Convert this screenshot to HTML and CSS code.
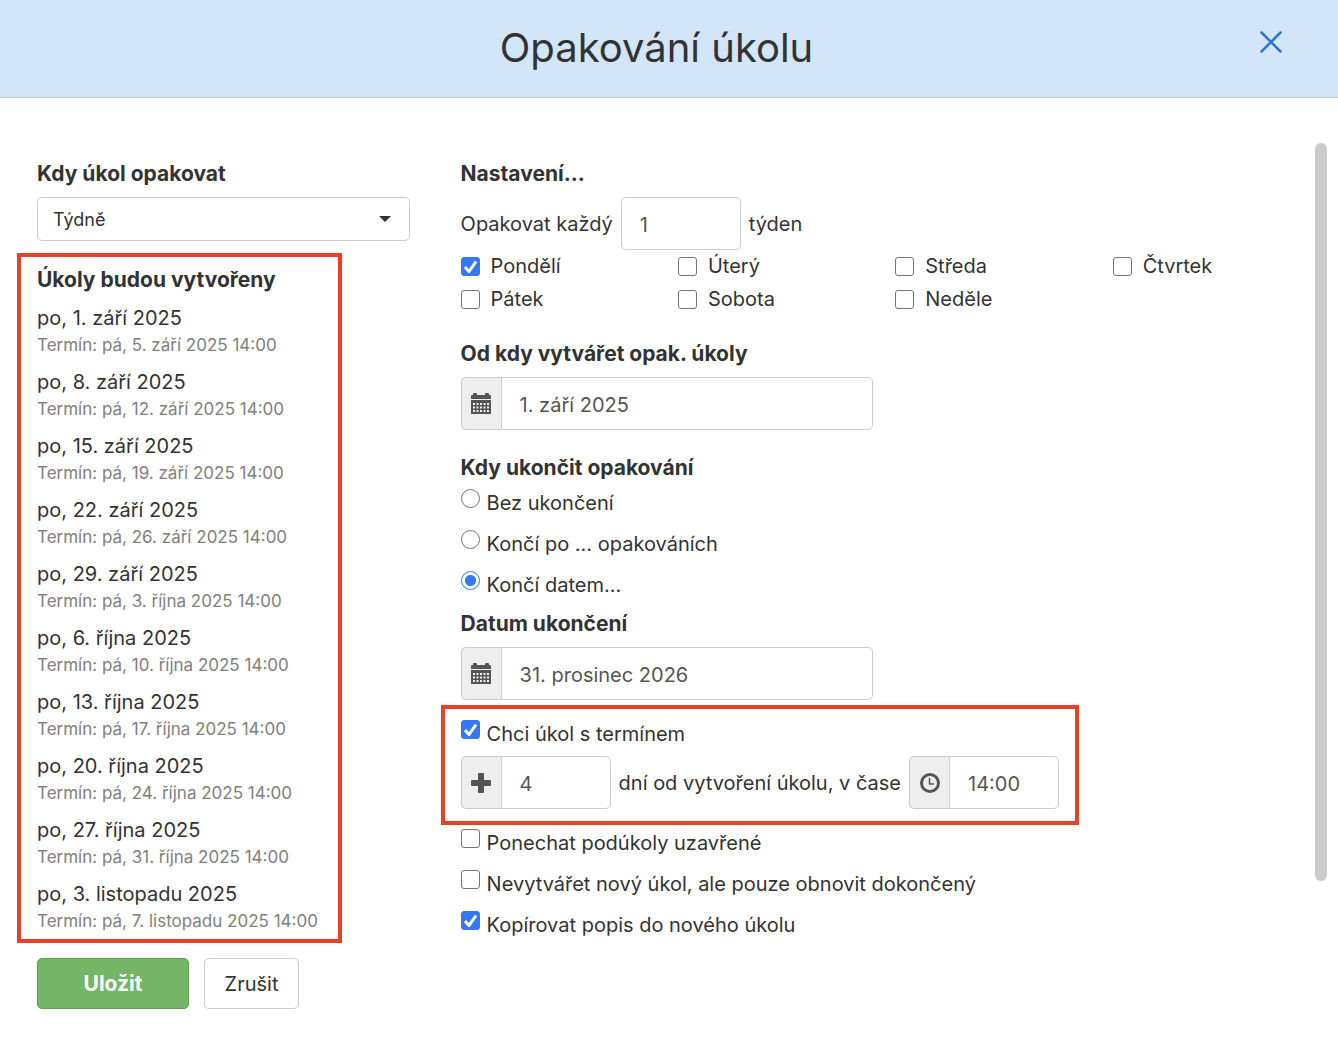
FILE: index.html
```html
<!DOCTYPE html>
<html lang="cs">
<head>
<meta charset="UTF-8">
<meta name="viewport" content="width=device-width, initial-scale=1.0">
<title>Opakování úkolu</title>
<link rel="stylesheet" href="styles.css">
</head>
<body>
<svg class="sprite" aria-hidden="true">
    <symbol id="icon-calendar" viewBox="0 0 20 21">
        <path d="M0 6V3a1 1 0 0 1 1-1h1V1a1 1 0 0 1 1-1h2a1 1 0 0 1 1 1v1h8V1a1 1 0 0 1 1-1h2a1 1 0 0 1 1 1v1h1a1 1 0 0 1 1 1v3z"/>
        <path fill-rule="evenodd" d="M0 7h20v14H0z M2 10v2h2v-2z M5.500 10v2h2v-2z M9 10v2h2v-2z M12.500 10v2h2v-2z M16 10v2h2v-2z M2 13.500v2h2v-2z M5.500 13.500v2h2v-2z M9 13.500v2h2v-2z M12.500 13.500v2h2v-2z M16 13.500v2h2v-2z M2 17v2h2v-2z M5.500 17v2h2v-2z M9 17v2h2v-2z M12.500 17v2h2v-2z M16 17v2h2v-2z"/>
    </symbol>
</svg>

<header class="header">
    <h1>Opakování úkolu</h1>
    <button type="button" class="close" aria-label="Zavřít">
        <svg width="22" height="22" viewBox="0 0 22 22"><path d="M1.500 1.500l19 19M20.500 1.500l-19 19"/></svg>
    </button>
</header>

<form class="content">
    <div class="column">
        <label class="heading" for="period">Kdy úkol opakovat</label>
        <select id="period" name="period" class="select">
            <option>Denně</option>
            <option selected>Týdně</option>
            <option>Měsíčně</option>
            <option>Ročně</option>
        </select>

        <section class="highlight preview">
            <h2 class="heading">Úkoly budou vytvořeny</h2>
            <ul class="taskList">
                <li>po, 1. září 2025 <small>Termín: pá, 5. září 2025 14:00</small></li>
                <li>po, 8. září 2025 <small>Termín: pá, 12. září 2025 14:00</small></li>
                <li>po, 15. září 2025 <small>Termín: pá, 19. září 2025 14:00</small></li>
                <li>po, 22. září 2025 <small>Termín: pá, 26. září 2025 14:00</small></li>
                <li>po, 29. září 2025 <small>Termín: pá, 3. října 2025 14:00</small></li>
                <li>po, 6. října 2025 <small>Termín: pá, 10. října 2025 14:00</small></li>
                <li>po, 13. října 2025 <small>Termín: pá, 17. října 2025 14:00</small></li>
                <li>po, 20. října 2025 <small>Termín: pá, 24. října 2025 14:00</small></li>
                <li>po, 27. října 2025 <small>Termín: pá, 31. října 2025 14:00</small></li>
                <li>po, 3. listopadu 2025 <small>Termín: pá, 7. listopadu 2025 14:00</small></li>
            </ul>
        </section>

        <div class="buttons">
            <button type="submit" class="btn btnSave">Uložit</button>
            <button type="button" class="btn btnCancel">Zrušit</button>
        </div>
    </div>

    <div class="column">
        <h2 class="heading">Nastavení...</h2>
        <div class="row">
            <label for="every">Opakovat každý</label>
            <input type="text" id="every" name="every" class="input inputSmall" value="1">
            <span>týden</span>
        </div>
        <div class="days">
            <label class="day"><input type="checkbox" name="day" value="1" checked> Pondělí</label>
            <label class="day"><input type="checkbox" name="day" value="2"> Úterý</label>
            <label class="day"><input type="checkbox" name="day" value="3"> Středa</label>
            <label class="day"><input type="checkbox" name="day" value="4"> Čtvrtek</label>
            <label class="day"><input type="checkbox" name="day" value="5"> Pátek</label>
            <label class="day"><input type="checkbox" name="day" value="6"> Sobota</label>
            <label class="day"><input type="checkbox" name="day" value="7"> Neděle</label>
        </div>

        <label class="heading spaced" for="from">Od kdy vytvářet opak. úkoly</label>
        <div class="group groupDate">
            <span class="addon"><svg width="20" height="21"><use href="#icon-calendar"/></svg></span>
            <input type="text" id="from" name="from" class="input" value="1. září 2025">
        </div>

        <h2 class="heading spaced tight">Kdy ukončit opakování</h2>
        <div class="options optionsEnd">
            <label class="option"><input type="radio" name="end" value="never"> Bez ukončení</label>
            <label class="option"><input type="radio" name="end" value="count"> Končí po ... opakováních</label>
            <label class="option"><input type="radio" name="end" value="date" checked> Končí datem...</label>
        </div>

        <label class="heading" for="until">Datum ukončení</label>
        <div class="group groupDate">
            <span class="addon"><svg width="20" height="21"><use href="#icon-calendar"/></svg></span>
            <input type="text" id="until" name="until" class="input" value="31. prosinec 2026">
        </div>

        <div class="highlight deadline">
            <label class="option"><input type="checkbox" name="deadline" checked> Chci úkol s termínem</label>
            <div class="row">
                <div class="group groupShort">
                    <span class="addon"><svg width="20" height="20" viewBox="0 0 20 20"><path d="M8 0h4a1 1 0 0 1 1 1v6h6a1 1 0 0 1 1 1v4a1 1 0 0 1-1 1h-6v6a1 1 0 0 1-1 1H8a1 1 0 0 1-1-1v-6H1a1 1 0 0 1-1-1V8a1 1 0 0 1 1-1h6V1a1 1 0 0 1 1-1z"/></svg></span>
                    <input type="text" id="offset" name="offset" class="input" value="4">
                </div>
                <label for="offset">dní od vytvoření úkolu, v čase</label>
                <div class="group groupShort">
                    <span class="addon"><svg width="20" height="20" viewBox="0 0 20 20"><circle class="stroke" cx="10" cy="10" r="8.500" stroke-width="3"/><path class="stroke" d="M9.500 5v6H14" stroke-width="1.500"/></svg></span>
                    <input type="text" name="time" class="input" value="14:00" aria-label="Čas">
                </div>
            </div>
        </div>

        <div class="options">
            <label class="option"><input type="checkbox" name="closed"> Ponechat podúkoly uzavřené</label>
            <label class="option"><input type="checkbox" name="renew"> Nevytvářet nový úkol, ale pouze obnovit dokončený</label>
            <label class="option"><input type="checkbox" name="copy" checked> Kopírovat popis do nového úkolu</label>
        </div>
    </div>

    <div class="scrollbar"></div>
</form>
</body>
</html>
```

FILE: styles.css
```css
* {
    box-sizing: border-box;
}

body {
    margin: 0;
    background: #fff;
    color: #333;
    font-family: Inter, "Liberation Sans", sans-serif;
    font-size: 20px;
    line-height: 30px;
}

input,
select,
button {
    font: inherit;
    color: inherit;
}

.sprite {
    display: none;
}

/* Header */
.header {
    display: flex;
    align-items: center;
    padding: 16px 41px 17px 68px;
    background: #d3e5f9;
    border-bottom: 1px solid #b5cde3;
}

.header h1 {
    flex: 1;
    margin: 0;
    font-size: 40px;
    font-weight: 400;
    line-height: 62px;
    text-align: center;
}

.close {
    display: flex;
    align-items: center;
    justify-content: center;
    width: 52px;
    height: 52px;
    margin-bottom: 12px;
    padding: 0;
    border: none;
    background: none;
    cursor: pointer;
}

.close path {
    fill: none;
    stroke: #2e74d2;
    stroke-width: 2.5;
    stroke-linecap: round;
}

/* Layout */
.content {
    position: relative;
    display: grid;
    grid-template-columns: 3fr 7fr;
    gap: 51px;
    padding: 61px 8px 35px 37px;
}

.scrollbar {
    position: absolute;
    top: 45px;
    right: 11px;
    width: 12px;
    height: 78%;
    border-radius: 6px;
    background: #cbcbcb;
}

.heading {
    display: block;
    margin: 0 0 8px;
    font-size: 21px;
    font-weight: 700;
    line-height: 30px;
}

.spaced {
    margin-top: 23px;
}

.tight {
    margin-bottom: 5px;
}

.highlight {
    width: fit-content;
    margin-left: -20px;
    padding: 0 16px;
    border: 4px solid #ea4025;
}

/* Created tasks */
.select {
    display: block;
    width: 100%;
    height: 44px;
    padding: 1px 15px 0;
    border: 1px solid #ccc;
    border-radius: 5px;
    background: #fff url("data:image/svg+xml,%3Csvg xmlns='http://www.w3.org/2000/svg' width='12' height='6'%3E%3Cpath d='M0 0h12L6 6z' fill='%23333'/%3E%3C/svg%3E") no-repeat right 18px center;
    font-size: 18px;
    appearance: none;
}

.preview {
    width: 325px;
    margin-top: 12px;
    padding-top: 8px;
    padding-bottom: 6px;
}

.taskList {
    margin: 0;
    padding: 0;
    list-style: none;
}

.taskList li + li {
    margin-top: 10px;
}

.taskList small {
    display: block;
    color: #808080;
    font-size: 17px;
    line-height: 24px;
    white-space: nowrap;
}

.buttons {
    display: flex;
    gap: 15px;
    margin-top: 15px;
}

.btn {
    height: 51px;
    border: 1px solid #ccc;
    border-radius: 5px;
    background: #fff;
    cursor: pointer;
}

.btnSave {
    width: 152px;
    border-color: #5ea14f;
    background: #75b567;
    color: #fff;
    font-size: 21px;
    font-weight: 700;
}

.btnCancel {
    width: 95px;
}

/* Inputs */
.row {
    display: flex;
    align-items: center;
    gap: 8px;
}

.input {
    width: 100%;
    height: 53px;
    padding: 2px 18px 0;
    border: 1px solid #ccc;
    border-radius: 5px;
    background: #fff;
    color: #555;
}

.inputSmall {
    width: 120px;
}

.group {
    display: flex;
}

.groupDate {
    width: 412px;
}

.groupShort {
    width: 150px;
}

.group .input {
    flex: 1;
    min-width: 0;
    border-radius: 0 5px 5px 0;
}

.addon {
    display: flex;
    flex: 0 0 40px;
    align-items: center;
    justify-content: center;
    border: 1px solid #ccc;
    border-right: none;
    border-radius: 5px 0 0 5px;
    background: #eee;
}

.addon svg {
    fill: #555;
}

.addon .stroke {
    fill: none;
    stroke: #555;
}

/* Checkboxes and radios */
input[type="checkbox"],
input[type="radio"] {
    flex: none;
    width: 19px;
    height: 19px;
    margin: 0;
    border: 1px solid #767676;
    border-radius: 3px;
    background: #fff center no-repeat;
    appearance: none;
}

input[type="radio"] {
    border-radius: 50%;
}

input[type="checkbox"]:checked {
    border-color: #3478f6;
    background-color: #3478f6;
    background-image: url("data:image/svg+xml,%3Csvg xmlns='http://www.w3.org/2000/svg' width='13' height='13'%3E%3Cpath d='M1 7l4 4.500L12 1.500' fill='none' stroke='%23fff' stroke-width='3'/%3E%3C/svg%3E");
}

input[type="radio"]:checked {
    border-color: #3478f6;
    background-image: radial-gradient(circle, #3478f6 5px, transparent 6px);
}

.days {
    display: grid;
    grid-template-columns: repeat(4, 1fr);
}

.day {
    display: flex;
    align-items: center;
    gap: 11px;
    line-height: 33px;
}

.option {
    display: flex;
    align-items: flex-start;
    gap: 7px;
}

.option input {
    margin-top: 1px;
}

.options {
    display: grid;
    gap: 11px;
    margin-top: 3px;
}

.optionsEnd {
    margin-bottom: 9px;
}

.deadline {
    margin-top: 5px;
    padding-top: 10px;
    padding-bottom: 12px;
}

.deadline .row {
    margin-top: 7px;
}
```
